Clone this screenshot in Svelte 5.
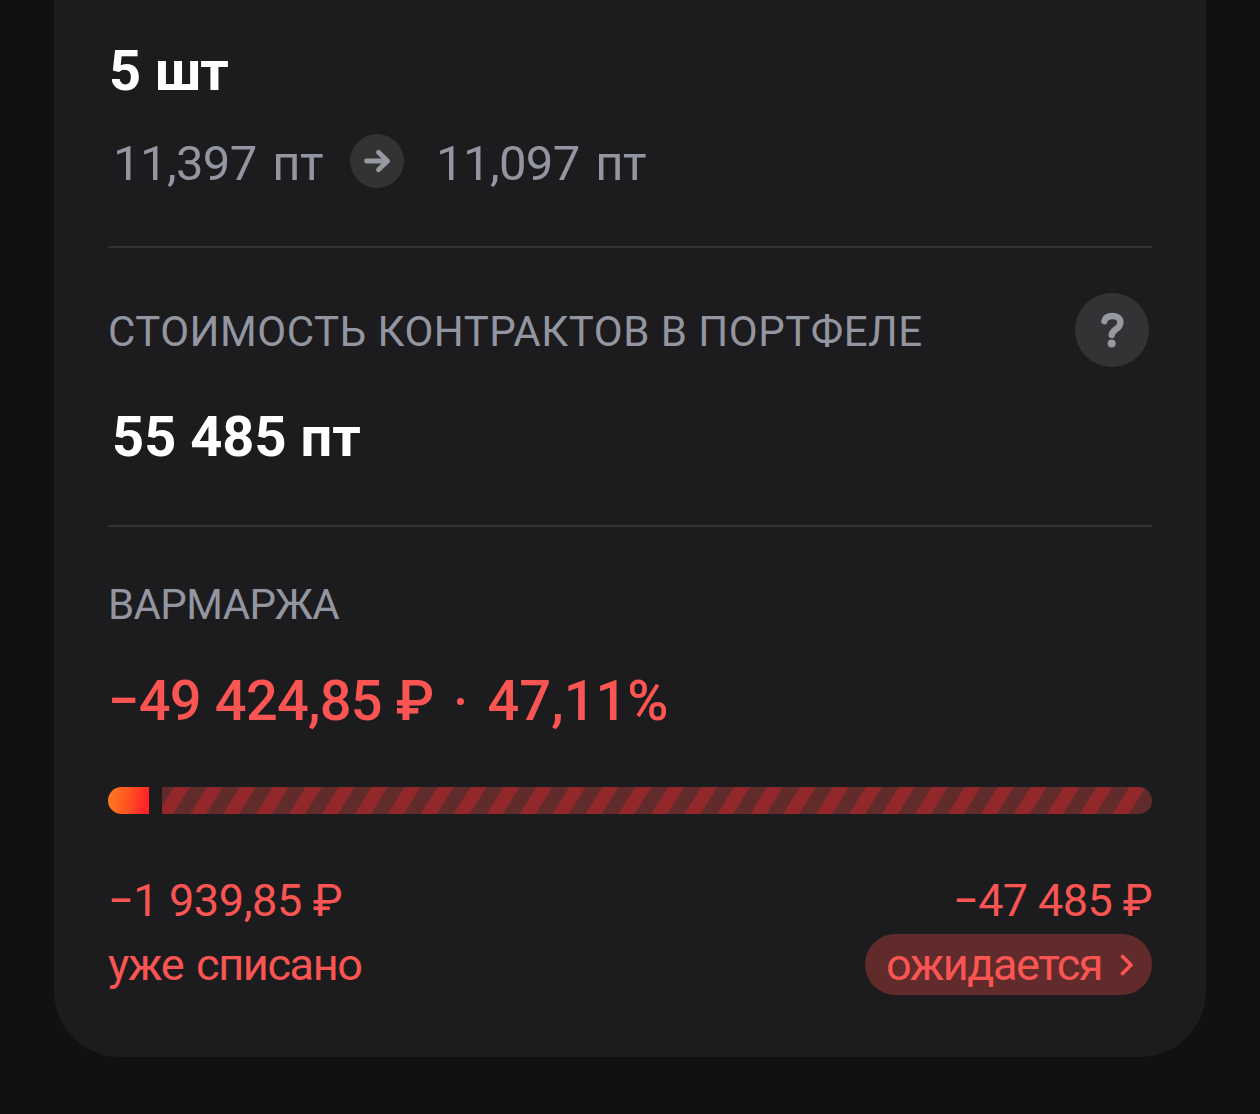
<script>
	let position = {
		amount: '5 шт',
		priceFrom: '11,397 пт',
		priceTo: '11,097 пт',
		cost: '55 485 пт'
	};

	let margin = {
		total: '−49 424,85 ₽',
		percent: '47,11%',
		charged: '−1 939,85 ₽',
		expected: '−47 485 ₽'
	};
</script>

<div class="card">
	<div class="value amount">{position.amount}</div>
	<div class="prices">
		<span class="price">{position.priceFrom}</span>
		<svg class="arrow" viewBox="0 0 54 54">
			<circle cx="27" cy="27" r="27" fill="#333334" />
			<path d="M16.5 27H37M28.5 18.2L37.6 27L28.5 35.8" />
		</svg>
		<span class="price">{position.priceTo}</span>
	</div>

	<div class="section cost">
		<div class="head">
			<span class="label">СТОИМОСТЬ КОНТРАКТОВ В ПОРТФЕЛЕ</span>
			<svg class="help" viewBox="0 0 74 74">
				<circle cx="37" cy="37" r="37" fill="#333335" />
				<path d="M29.4 28.2C30.2 24.8 33 23 37.2 23C42 23 45.4 25.2 45.4 29.4C45.4 32.6 43.6 34.3 41 36.2C38.2 38.2 36.9 39.3 36.7 42" />
				<circle cx="36.7" cy="50.4" r="4" fill="#9699a2" />
			</svg>
		</div>
		<div class="value">{position.cost}</div>
	</div>

	<div class="section margin">
		<div class="label">ВАРМАРЖА</div>
		<div class="total">
			<span>{margin.total}</span>
			<span class="dot"></span>
			<span class="percent">{margin.percent}</span>
		</div>
		<div class="bar">
			<div class="done"></div>
			<svg class="rest" viewBox="0 0 990 27">
				<defs>
					<pattern
						id="stripes"
						width="32.95"
						height="27"
						patternUnits="userSpaceOnUse"
						patternTransform="translate(-4.8 27) skewX(-31.7)"
					>
						<rect width="16" height="27" fill="#922829" />
					</pattern>
				</defs>
				<rect width="990" height="27" fill="#612b2c" />
				<rect width="990" height="27" fill="url(#stripes)" />
			</svg>
		</div>
		<div class="parts">
			<div>
				<div class="sum charged">{margin.charged}</div>
				<div class="note">уже списано</div>
			</div>
			<div class="right">
				<div class="sum expected">{margin.expected}</div>
				<div class="pill">
					<span>ожидается</span>
					<svg class="chevron" viewBox="0 0 14 22">
						<path d="M2.5 2.5L11 11L2.5 19.5" />
					</svg>
				</div>
			</div>
		</div>
	</div>
</div>

<style>
	:global(body) {
		background: #111111;
	}
	.card {
		box-sizing: border-box;
		height: 1057px;
		margin: 0 54px;
		padding: 41px 54px 0;
		background: #1c1c1e;
		border-radius: 0 0 66px 66px;
		font-family: Roboto, 'Liberation Sans', sans-serif;
		color: #9396a0;
		white-space: nowrap;
	}
	svg {
		display: block;
		flex: none;
	}
	path {
		fill: none;
		stroke: #9699a2;
		stroke-linecap: round;
		stroke-linejoin: round;
	}
	.value {
		padding-left: 4px;
		font-size: 56px;
		font-weight: 700;
		line-height: 60px;
		color: #fff;
	}
	.amount {
		padding-left: 1px;
		letter-spacing: -1px;
		word-spacing: 2px;
	}
	.prices {
		display: flex;
		height: 54px;
		margin-top: 33px;
	}
	.price {
		width: 235px;
		padding-left: 5px;
		font-size: 49px;
		line-height: 60px;
		letter-spacing: -0.6px;
		word-spacing: 4px;
	}
	.arrow {
		width: 54px;
		height: 54px;
		margin: 0 27px 0 2px;
	}
	.arrow path {
		stroke-width: 4.8;
	}
	.section {
		border-top: 2px solid #323234;
	}
	.cost {
		height: 277px;
		margin-top: 58px;
	}
	.head {
		display: flex;
		justify-content: space-between;
		margin: 45px 3.5px 37px 0;
	}
	.label {
		font-size: 42px;
		line-height: 50px;
	}
	.head .label {
		line-height: 77px;
		letter-spacing: 0.5px;
	}
	.help {
		width: 74px;
		height: 74px;
	}
	.help path {
		stroke-width: 6.4;
	}
	.margin {
		color: #fb5553;
	}
	.margin .label {
		margin-top: 53px;
		letter-spacing: -0.6px;
		color: #9396a0;
	}
	.total {
		display: flex;
		align-items: center;
		margin-top: 41px;
		font-size: 56px;
		font-weight: 500;
		line-height: 60px;
		letter-spacing: -0.8px;
		word-spacing: 1px;
	}
	.dot {
		width: 7px;
		height: 7px;
		margin: 0 24px 0 23px;
		border-radius: 50%;
		background: #fb5553;
	}
	.percent {
		letter-spacing: 0;
	}
	.bar {
		display: flex;
		gap: 13px;
		height: 27px;
		margin-top: 56px;
		border-radius: 14px;
		overflow: hidden;
	}
	.done {
		width: 41px;
		background: linear-gradient(100deg, #ff7d1f, #ff5722 45%, #ff2328 90%);
	}
	.rest {
		width: 990px;
		height: 27px;
	}
	.parts {
		display: flex;
		justify-content: space-between;
		margin-top: 57px;
		font-size: 45px;
		line-height: 60px;
	}
	.right {
		display: flex;
		flex-direction: column;
		align-items: flex-end;
	}
	.charged {
		letter-spacing: -0.4px;
	}
	.expected {
		letter-spacing: -0.6px;
	}
	.note {
		margin-top: 4px;
		letter-spacing: -1.35px;
		word-spacing: 3px;
	}
	.pill {
		display: flex;
		box-sizing: border-box;
		justify-content: space-between;
		align-items: center;
		width: 287px;
		height: 61px;
		margin-top: 3px;
		padding: 0 18px 0 21px;
		border-radius: 31px;
		background: #612b2c;
		letter-spacing: -1.45px;
	}
	.chevron {
		width: 14px;
		height: 22px;
	}
	.chevron path {
		stroke: #fb5553;
		stroke-width: 3.6;
	}
</style>
